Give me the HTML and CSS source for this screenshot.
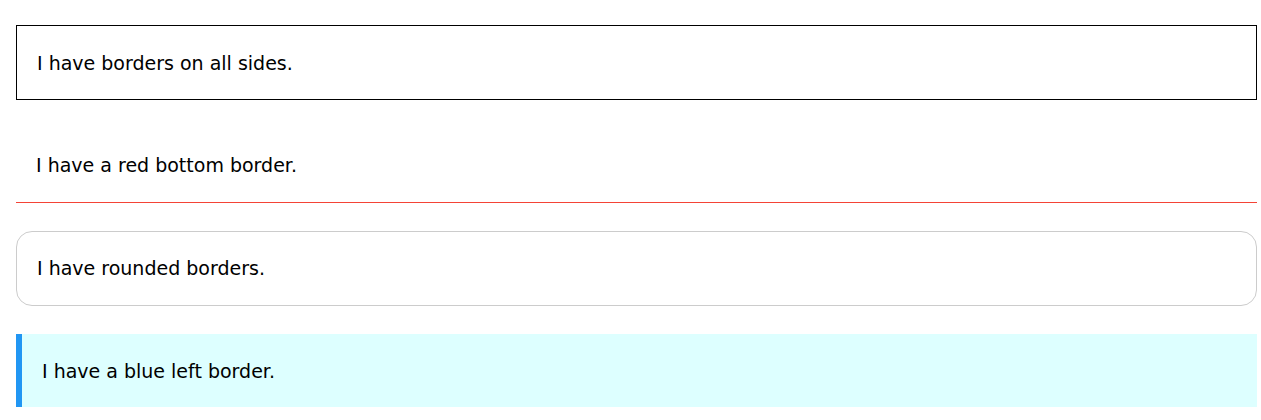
FILE: index.html
```html
<!DOCTYPE html>
<html>
<head>
<meta charset="utf-8">
<link rel="stylesheet" href="styles.css">
</head>
<body>
<div class="page">
  <div class="panel panel-all"><p>I have borders on all sides.</p></div>
  <div class="panel panel-bottom"><p>I have a red bottom border.</p></div>
  <div class="panel panel-round"><p>I have rounded borders.</p></div>
  <div class="panel panel-left"><p>I have a blue left border.</p></div>
</div>
</body>
</html>
```
FILE: styles.css
```css
html, body {
  margin: 0;
  padding: 0;
  background: #fff;
}
.page {
  padding: 25px 4px 0 16px;
  display: flex;
  flex-direction: column;
  gap: 28px;
  font-family: "DejaVu Sans", Verdana, sans-serif;
  font-size: 19px;
  color: #000;
}
.panel {
  padding: 0 20px;
  height: 73.3px;
  display: flex;
  align-items: center;
}
.panel p {
  margin: 0;
  line-height: 24px;
}
.panel-all {
  border: 1px solid #000;
}
.panel-bottom {
  border-bottom: 1px solid #f44336;
}
.panel-round {
  border: 1px solid #ccc;
  border-radius: 16px;
}
.panel-left {
  border-left: 6px solid #2196f3;
  background: #ddffff;
}
```
